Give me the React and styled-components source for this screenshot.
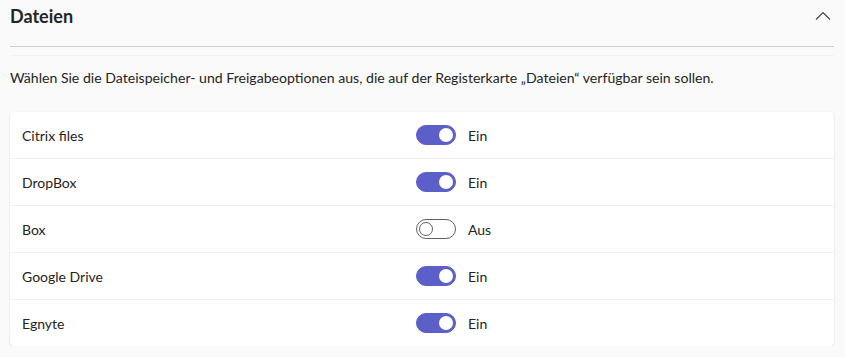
import React, { useState } from "react";
import styled, { createGlobalStyle } from "styled-components";

const GlobalStyle = createGlobalStyle`
  html, body {
    margin: 0;
    padding: 0;
    background: #fafafa;
    font-family: "Segoe UI", Lato, "Noto Sans", sans-serif;
    color: #242424;
  }
`;

const Page = styled.div`
  padding: 0 11px 0 10px;
`;

const Header = styled.div`
  display: flex;
  align-items: center;
  justify-content: space-between;
  height: 47px;
  border-bottom: 1px solid #d1d1d1;
  box-sizing: border-box;
  padding-bottom: 14px;
`;

const Title = styled.h2`
  margin: 0;
  font-size: 18px;
  font-weight: 700;
  line-height: 24px;
`;

const ChevronButton = styled.button`
  border: 0;
  background: none;
  padding: 0;
  width: 20px;
  height: 20px;
  display: flex;
  align-items: center;
  justify-content: center;
  margin-right: 1px;
  cursor: pointer;
`;

const FaintRule = styled.div`
  margin-top: 8px;
  height: 1px;
  background: #f2f2f2;
`;

const Description = styled.p`
  margin: 0;
  padding: 12px 0 0;
  font-size: 14.1px;
  line-height: 20px;
`;

const Card = styled.div`
  margin-top: 24px;
  background: #fff;
  border-radius: 4px;
  box-shadow: 0 1px 2px rgba(0, 0, 0, 0.12), 0 0 2px rgba(0, 0, 0, 0.06);
`;

const Row = styled.div`
  display: grid;
  grid-template-columns: 394px 1fr;
  align-items: center;
  height: ${(p) => (p.first ? "46px" : "47px")};
  padding: 0 12px;
  border-top: ${(p) => (p.first ? "none" : "1px solid #f0f0f0")};
  box-sizing: border-box;
  font-size: 14px;
`;

const SwitchWrap = styled.label`
  display: flex;
  align-items: center;
  gap: 12px;
  cursor: pointer;
`;

const Track = styled.span`
  position: relative;
  width: 40px;
  height: 20px;
  border-radius: 10px;
  box-sizing: border-box;
  background: ${(p) => (p.on ? "#5b5fc7" : "#fff")};
  border: 1px solid ${(p) => (p.on ? "#5b5fc7" : "#616161")};
`;

const Knob = styled.span`
  position: absolute;
  top: 2px;
  left: ${(p) => (p.on ? "22px" : "2px")};
  width: 14px;
  height: 14px;
  border-radius: 50%;
  box-sizing: border-box;
  background: ${(p) => (p.on ? "#fff" : "transparent")};
  border: ${(p) => (p.on ? "none" : "1px solid #616161")};
`;

const providers = [
  { name: "Citrix files", on: true },
  { name: "DropBox", on: true },
  { name: "Box", on: false },
  { name: "Google Drive", on: true },
  { name: "Egnyte", on: true },
];

function Toggle({ on, onClick }) {
  return (
    <SwitchWrap onClick={onClick}>
      <Track on={on}>
        <Knob on={on} />
      </Track>
      <span>{on ? "Ein" : "Aus"}</span>
    </SwitchWrap>
  );
}

export default function App() {
  const [items, setItems] = useState(providers);

  const flip = (i) =>
    setItems(items.map((it, j) => (j === i ? { ...it, on: !it.on } : it)));

  return (
    <Page>
      <GlobalStyle />
      <Header>
        <Title>Dateien</Title>
        <ChevronButton aria-label="Einklappen">
          <svg width="16" height="10" viewBox="0 0 16 10">
            <path d="M1 8.5 L8 1.5 L15 8.5" fill="none" stroke="#424242" strokeWidth="1.1" />
          </svg>
        </ChevronButton>
      </Header>
      <FaintRule />
      <Description>
        Wählen Sie die Dateispeicher- und Freigabeoptionen aus, die auf der Registerkarte „Dateien“ verfügbar sein sollen.
      </Description>
      <Card>
        {items.map((it, i) => (
          <Row key={it.name} first={i === 0}>
            <span>{it.name}</span>
            <Toggle on={it.on} onClick={() => flip(i)} />
          </Row>
        ))}
      </Card>
    </Page>
  );
}
